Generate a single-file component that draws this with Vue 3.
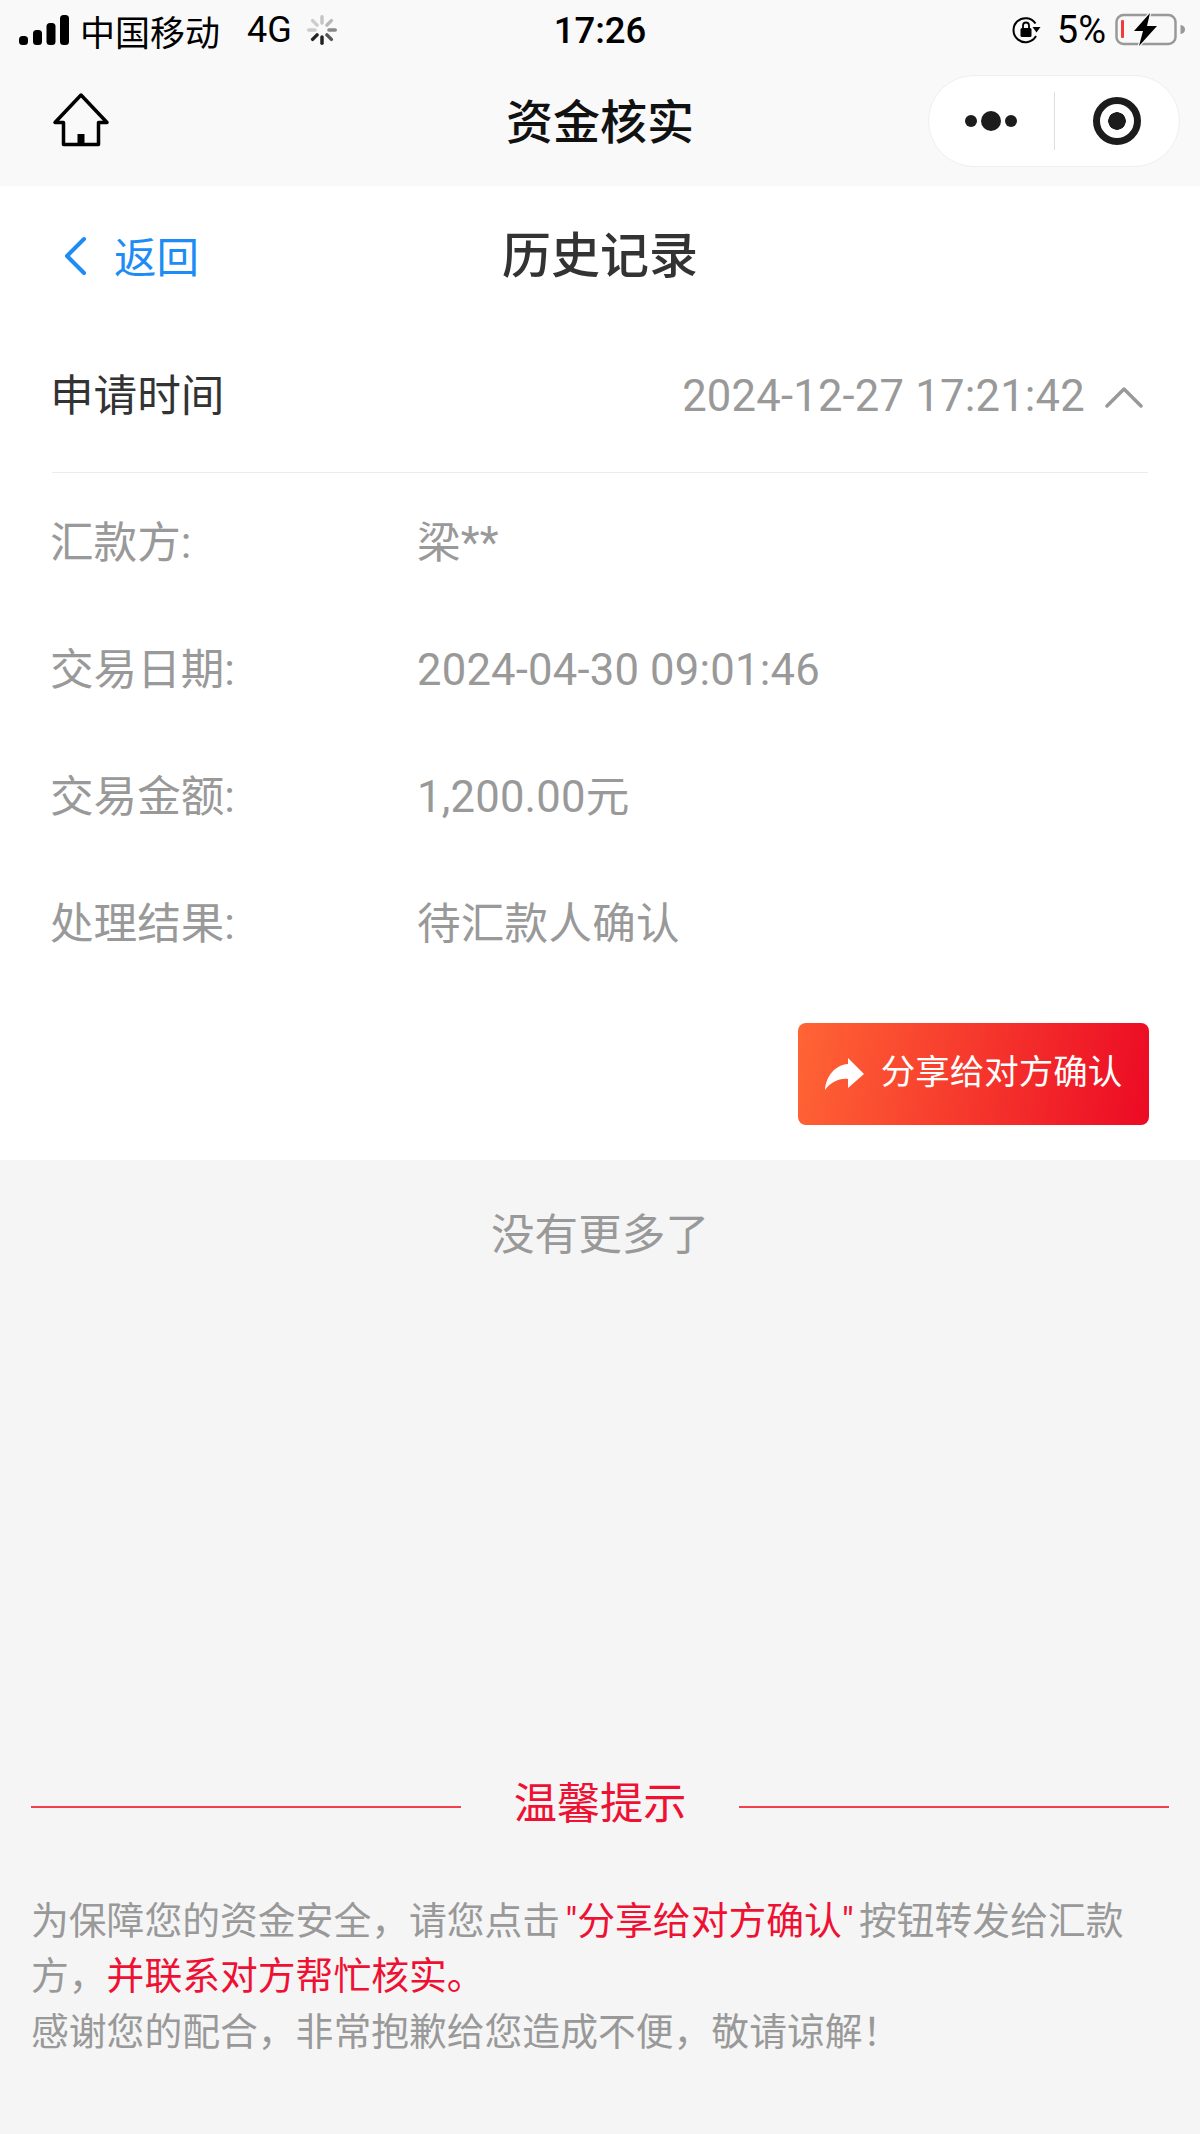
<template>
  <div class="page">
    <!-- 状态栏 -->
    <div class="status-bar">
      <div class="status-left">
        <svg class="signal" width="50" height="32" viewBox="0 0 50 32">
          <rect x="0" y="22" width="9" height="9" rx="3.5" fill="#000" />
          <rect x="14" y="16" width="9" height="15" rx="3.5" fill="#000" />
          <rect x="27.500" y="9" width="9" height="22" rx="3.5" fill="#000" />
          <rect x="41" y="1" width="9" height="30" rx="3.5" fill="#000" />
        </svg>
        <span class="carrier">中国移动</span>
        <span class="network">4G</span>
        <svg class="spinner" width="30" height="30" viewBox="0 0 26 26">
          <g stroke-width="3" stroke-linecap="round">
            <path v-for="s in spokes" :key="s.a" d="M13 1.500V7" :stroke="s.c" :transform="`rotate(${s.a} 13 13)`" />
          </g>
        </svg>
      </div>
      <div class="status-time">17:26</div>
      <div class="status-right">
        <svg class="lock" width="31" height="30" viewBox="0 0 30 30" fill="none">
          <path d="M24 8.500A12 12 0 1 0 24.500 21" stroke="#000" stroke-width="2" />
          <path d="M21 12L29 12L25 17.500Z" fill="#000" />
          <rect x="9" y="13" width="11" height="9" rx="1.500" fill="#000" />
          <path d="M11.500 13V10.500A3 3 0 0 1 17.500 10.500V13" stroke="#000" stroke-width="1.800" />
        </svg>
        <span class="percent">5%</span>
        <svg class="battery" width="71" height="34" viewBox="0 0 71 34" fill="none">
          <rect x="1.500" y="2" width="59" height="29" rx="7" stroke="#999" stroke-width="2.500" />
          <rect x="6" y="7" width="3" height="18" rx="1" fill="#f23b3b" />
          <path d="M65.500 12C68.500 12.500 70 14 70 16.500C70 19 68.500 20.500 65.500 21Z" fill="#999" />
          <path d="M35 0L19 18H28L24 33L42 13H32Z" fill="#000" stroke="#f9f9f9" stroke-width="2.500" paint-order="stroke" />
        </svg>
      </div>
    </div>

    <!-- 小程序导航 -->
    <div class="nav-bar">
      <svg class="home" width="58" height="58" viewBox="0 0 58 58" fill="none">
        <path d="M29 3L3 30.500H11.500V52.500H46.500V30.500H55Z" stroke="#000" stroke-width="3.500" stroke-linejoin="round" />
        <rect x="25.500" y="42" width="7" height="10" fill="#000" />
      </svg>
      <div class="nav-title">资金核实</div>
      <div class="capsule">
        <div class="capsule-btn">
          <span class="dot"></span>
          <span class="dot big"></span>
          <span class="dot"></span>
        </div>
        <div class="capsule-line"></div>
        <div class="capsule-btn">
          <span class="target"></span>
        </div>
      </div>
    </div>

    <!-- 历史记录 -->
    <div class="card">
      <div class="header">
        <a class="back">
          <svg width="24" height="42" viewBox="0 0 24 42" fill="none">
            <path d="M21 6L4 23L21 40" stroke="#1e8cf5" stroke-width="4" stroke-linecap="round" stroke-linejoin="round" />
          </svg>
          <span>返回</span>
        </a>
        <h1>历史记录</h1>
      </div>

      <div class="record">
        <div class="record-head">
          <span class="record-label">申请时间</span>
          <span class="record-time">
            {{ record.time }}
            <svg width="38" height="22" viewBox="0 0 38 22" fill="none">
              <path d="M2 20L19 3L36 20" stroke="#999" stroke-width="3.500" stroke-linecap="round" stroke-linejoin="round" />
            </svg>
          </span>
        </div>
        <div class="record-body">
          <div class="row" v-for="row in record.rows" :key="row.label">
            <span class="row-label">{{ row.label }}</span>
            <span class="row-value">{{ row.value }}</span>
          </div>
        </div>
        <div class="actions">
          <button type="button" class="share-btn">
            <svg width="39" height="32" viewBox="0 0 39 32">
              <path d="M0 32C1 18 10 7 23 6V0L39 16L23 30V21C14 20 6 24 0 32Z" fill="#fff" />
            </svg>
            <span>分享给对方确认</span>
          </button>
        </div>
      </div>
    </div>

    <div class="no-more">没有更多了</div>

    <!-- 温馨提示 -->
    <div class="tips">
      <div class="tips-title">
        <span class="tips-line"></span>
        <span class="tips-text">温馨提示</span>
        <span class="tips-line"></span>
      </div>
      <div class="tips-content">
        <div>为保障您的资金安全，请您点击<em class="quoted">"分享给对方确认"</em>按钮转发给汇款</div>
        <div>方，<em>并联系对方帮忙核实。</em></div>
        <div>感谢您的配合，非常抱歉给您造成不便，敬请谅解！</div>
      </div>
    </div>
  </div>
</template>

<script setup>
import { ref } from 'vue'

// 状态栏加载图标的八根辐条
const spokes = [
  { a: 0, c: '#c4c4c4' },
  { a: 45, c: '#b8b8b8' },
  { a: 90, c: '#888' },
  { a: 135, c: '#555' },
  { a: 180, c: '#222' },
  { a: 225, c: '#222' },
  { a: 270, c: '#ccc' },
  { a: 315, c: '#ccc' }
]

const record = ref({
  time: '2024-12-27 17:21:42',
  rows: [
    { label: '汇款方:', value: '梁**' },
    { label: '交易日期:', value: '2024-04-30 09:01:46' },
    { label: '交易金额:', value: '1,200.00元' },
    { label: '处理结果:', value: '待汇款人确认' }
  ]
})
</script>

<style>
body {
  background: #f5f5f5;
}
</style>

<style scoped>
.page {
  height: 2134px;
  overflow: hidden;
  background: #f5f5f5;
  display: flex;
  flex-direction: column;
  font-family: "Roboto", "Noto Sans CJK SC", sans-serif;
}

/* 状态栏 */
.status-bar {
  height: 60px;
  flex: none;
  box-sizing: border-box;
  display: grid;
  grid-template-columns: 1fr auto 1fr;
  align-items: center;
  background: #f9f9f9;
  color: #000;
  padding: 0 14px 0 19px;
}
.status-left,
.status-right {
  display: flex;
  align-items: center;
}
.status-right {
  justify-content: flex-end;
}
.carrier {
  font-size: 35px;
  margin-left: 11px;
}
.network {
  font-size: 36px;
  margin-left: 27px;
}
.spinner {
  margin-left: 15px;
}
.status-time {
  font-size: 36.500px;
  font-weight: 500;
  margin-right: 5px;
}
.percent {
  font-size: 38px;
  margin: 0 9px 0 15px;
}

.nav-bar {
  height: 126px;
  flex: none;
  background: #f9f9f9;
  display: flex;
  align-items: center;
  justify-content: space-between;
  position: relative;
  padding: 0 20px 4px 52px;
  box-sizing: border-box;
}
.nav-title {
  position: absolute;
  left: 0;
  right: 0;
  padding-bottom: 6px;
  text-align: center;
  font-size: 47px;
  font-weight: 500;
  color: #111;
}
.capsule {
  width: 252px;
  height: 92px;
  box-sizing: border-box;
  border: 1px solid #efefef;
  border-radius: 46px;
  background: #fff;
  display: flex;
  align-items: center;
}
.capsule-btn {
  flex: 1;
  display: flex;
  align-items: center;
  justify-content: center;
  gap: 4px;
}
.capsule-line {
  width: 1px;
  height: 58px;
  background: #dedede;
}
.dot {
  width: 12px;
  height: 12px;
  border-radius: 50%;
  background: #1c1c1c;
}
.dot.big {
  width: 20px;
  height: 20px;
}
.target {
  width: 48px;
  height: 48px;
  box-sizing: border-box;
  border: 7px solid #1c1c1c;
  border-radius: 50%;
  background: radial-gradient(circle, #1c1c1c 0 8.500px, transparent 9px);
}

/* 卡片 */
.card {
  background: #fff;
  height: 974px;
  flex: none;
  display: flex;
  flex-direction: column;
}
.header {
  height: 138px;
  flex: none;
  box-sizing: border-box;
  position: relative;
  display: flex;
  align-items: center;
  padding: 0 0 2px 63px;
}
.back {
  display: flex;
  align-items: center;
  gap: 27px;
  color: #1e8cf5;
  font-size: 42.500px;
}
.header h1 {
  position: absolute;
  left: 0;
  right: 0;
  margin: 0;
  padding-bottom: 6px;
  text-align: center;
  font-size: 49px;
  font-weight: 500;
  color: #333;
}
.record {
  padding: 0 50px;
  display: flex;
  flex-direction: column;
}
.record-head {
  height: 149px;
  display: flex;
  align-items: baseline;
  justify-content: space-between;
  border-bottom: 1px solid #ebebeb;
  box-sizing: border-box;
  margin: 0 2px;
  font-size: 43.600px;
  line-height: 146px;
}
.record-label {
  color: #333;
  margin-left: -2px;
}
.record-time {
  display: flex;
  align-items: center;
  gap: 20px;
  color: #999;
  letter-spacing: 0.2px;
  margin-right: 5px;
}
.record-body {
  padding-top: 7px;
}
.row {
  height: 127px;
  display: flex;
  align-items: baseline;
  font-size: 43.600px;
  line-height: 127px;
  color: #999;
}
.row-label {
  width: 367px;
  flex: none;
}
.row-value {
  letter-spacing: 0.2px;
}
.actions {
  display: flex;
  justify-content: flex-end;
  margin-top: 35px;
  padding-right: 1px;
}
.share-btn {
  width: 351px;
  height: 102px;
  border: none;
  border-radius: 8px;
  padding: 0;
  background: linear-gradient(100deg, #ff6535, #ec0a24);
  color: #fff;
  font-family: inherit;
  font-size: 34.500px;
  display: flex;
  align-items: center;
  justify-content: center;
  gap: 17px;
}
.share-btn span {
  padding-bottom: 11px;
}

.no-more {
  flex: none;
  margin-top: 46px;
  text-align: center;
  font-size: 43.600px;
  line-height: 60px;
  color: #999;
}

/* 温馨提示 */
.tips {
  margin-top: auto;
  padding: 0 31px 74px;
}
.tips-title {
  display: flex;
  align-items: center;
  gap: 53px;
}
.tips-line {
  flex: 1;
  height: 2px;
  background: #f2404f;
  margin-top: 4px;
}
.tips-text {
  font-size: 43.200px;
  line-height: 60px;
  color: #ee1133;
}
.tips-content {
  margin-top: 59px;
  font-size: 37.800px;
  line-height: 55.500px;
  color: #999;
}
.tips-content em {
  font-style: normal;
  color: #ee1133;
}
.tips-content .quoted {
  margin: 0 5px;
}
</style>
